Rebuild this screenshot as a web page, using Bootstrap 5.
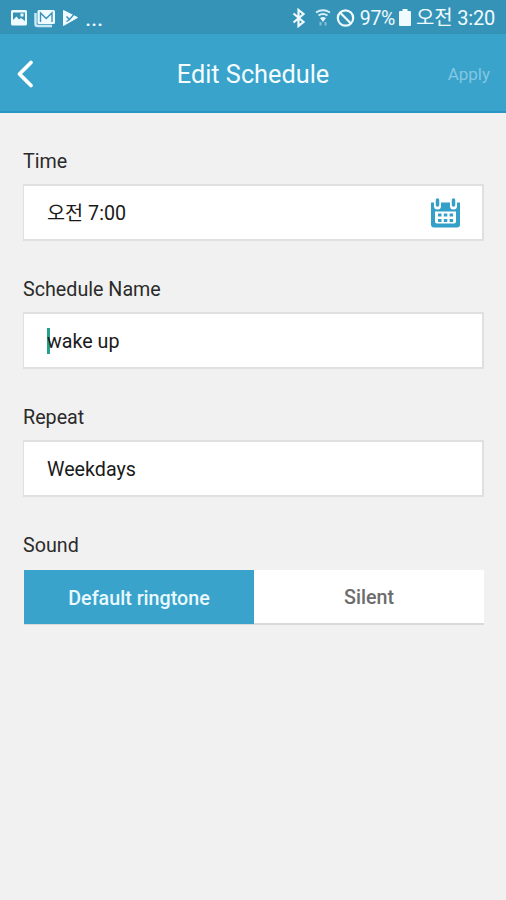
<!DOCTYPE html>
<html lang="en">
<head>
<meta charset="utf-8">
<meta name="viewport" content="width=device-width, initial-scale=1">
<title>Edit Schedule</title>
<link href="https://cdn.jsdelivr.net/npm/bootstrap@5.3.0/dist/css/bootstrap.min.css" rel="stylesheet">
<style>
  body { font-family: Roboto, "Noto Sans CJK KR", sans-serif; background: #f1f1f1; color: #2b2b2b; min-height: 900px; font-size: 19.700px; line-height: 24px; }
  svg { display: block; flex: none; }
  .status-bar { height: 34px; background: #3593b8; padding: 2px 11px 0 10px; color: #f0fbff; font-size: 20px; }
  .status-dots { font-size: 24px; margin-left: 6px; letter-spacing: -.3px; }
  .battery-level { font-size: 19.5px; letter-spacing: -.3px; margin: 1px 4px 0 5px; }
  .clock { margin-left: 5px; font-size: 20px; letter-spacing: -.2px; }
  .title-bar { height: 79px; background: #39a3cb; border-bottom: 2px solid #2695c3; padding: 2px 16px 0; display: grid; grid-template-columns: 1fr auto 1fr; }
  .title-bar h1 { font-size: 25.300px; font-weight: 400; color: #f4fcff; padding-top: 4px; }
  .apply-action { font-size: 17px; color: #83c7e2; background: none; border: 0; padding: 0; }
  .schedule-form { padding: 37px 22px 0 23px; }
  .field { height: 128px; }
  .field-label { line-height: 24px; margin-bottom: 10px; display: block; }
  .field-box { height: 57px; background: #fff; border: 2px solid #e0e0e0; border-left-width: 1px; padding: 3px 22px 0 23px; color: #1a1a1a; }
  .calendar-icon { margin-top: -3px; }
  .caret { width: 3px; height: 26px; background: #26a08f; margin: -2px -3px 0 0; }
  .sound-switch { height: 55px; margin: 12px 0 0 1px; border-bottom: 2px solid #d9d9d9; }
  .sound-switch button { border: 0; padding: 3px 0 0; font-weight: 500; }
  .sound-on { background: #39a3cb; color: #e8f9ff; margin-bottom: -1px; }
  .sound-off { background: #fff; color: #6c6c6c; }
</style>
</head>
<body>
<div class="status-bar d-flex align-items-center justify-content-between">
  <div class="d-flex align-items-center">
    <svg width="18" height="18" viewBox="0 0 18 18"><path fill="#f0fbff" fill-rule="evenodd" d="M2.500 1h13a1.500 1.500 0 0 1 1.500 1.500v12.500a1.500 1.500 0 0 1-1.500 1.500h-13a1.500 1.500 0 0 1-1.500-1.500v-12.500a1.500 1.500 0 0 1 1.500-1.500zM3 3.500V11l3.500-3.500 2.500 3 2-1.500 4 3v-8.500zM10.500 4.500h3v3h-3z"/></svg>
    <svg class="ms-1" width="24" height="19" viewBox="0 0 24 19"><path d="M3.500 4v11q0 2 2 2H20" fill="none" stroke="#c6e9f5" stroke-width="2.500"/><rect x="5.500" y="1" width="17.500" height="14" rx="1.500" fill="#f0fbff"/><path d="M8.500 13V4l5.700 5.500L20 4v9" fill="none" stroke="#3593b8" stroke-width="1.400"/></svg>
    <svg class="ms-1" width="19" height="18" viewBox="0 0 19 18"><path d="M3.500 1.500 17.500 8.500 3.500 16.500z" fill="#f0fbff" stroke="#f0fbff" stroke-linejoin="round"/><path d="M6.500 7.500l3 3 6-7M6.500 12.500l3-2" fill="none" stroke="#3593b8" stroke-width="1.500"/></svg>
    <span class="status-dots">...</span>
  </div>
  <div class="d-flex align-items-center">
    <svg width="14" height="20" viewBox="0 0 14 20"><path d="M1.500 5.500 11.500 14l-5 4V2l5 4-10 8.500" fill="none" stroke="#f0fbff" stroke-width="2.200"/></svg>
    <svg class="ms-2" width="18" height="20" viewBox="0 0 18 20"><g fill="none" stroke="#d5f0f9" stroke-width="2"><path d="M2 4.500q7-4.500 14 0M4.500 7.500q4.500-3 9 0"/></g><path d="M6 10q3-2 6 0l-3 4z" fill="#e5f7fc"/><path d="M6.500 14v3.500M11.500 14v3.500" stroke="#83bfd8" stroke-width="2"/></svg>
    <svg class="ms-1" width="19" height="20" viewBox="0 0 19 20"><circle cx="9.500" cy="10" r="7.700" fill="none" stroke="#f0fbff" stroke-width="2.200"/><path d="M4 4.500 15 15.500" stroke="#f0fbff" stroke-width="2.200"/></svg>
    <span class="battery-level">97%</span>
    <svg width="12" height="20" viewBox="0 0 12 20"><path fill="#f0fbff" d="M3.500 1h5v2H11q1 0 1 1v13q0 1-1 1H1q-1 0-1-1V4q0-1 1-1h2.500z"/></svg>
    <span class="clock">오전 3:20</span>
  </div>
</div>
<header class="title-bar align-items-center">
  <svg width="20" height="30" viewBox="0 0 20 30"><path d="M15 3.500 3.500 15 15 26.500" fill="none" stroke="#fff" stroke-width="3.800" stroke-linecap="round" stroke-linejoin="round"/></svg>
  <h1 class="m-0">Edit Schedule</h1>
  <button class="apply-action text-end" type="button">Apply</button>
</header>
<main class="schedule-form">
  <section class="field">
    <span class="field-label">Time</span>
    <div class="field-box d-flex align-items-center justify-content-between">
      <span>오전 7:00</span>
      <svg class="calendar-icon" width="29" height="32" viewBox="0 0 29 32"><path d="M0 5.500h29v22q0 3-3 3H3q-3 0-3-3z" fill="#349fc7"/><path d="M4 14.500h21v10q0 2-2 2H6q-2 0-2-2z" fill="#fff"/><g fill="none" stroke-linecap="round"><path d="M6.500 4v5M22.500 4v5" stroke="#fff" stroke-width="7"/><path d="M6.500 3v5M22.500 3v5" stroke="#349fc7" stroke-width="3.500"/></g><path d="M7 16.500h3.500v3H7zM12.800 16.500h3.500v3h-3.500zM18.600 16.500h3.500v3h-3.500zM7 22h3.500v3H7zM12.800 22h3.500v3h-3.500zM18.600 22h3.500v3h-3.500z" fill="#349fc7"/></svg>
    </div>
  </section>
  <section class="field">
    <span class="field-label">Schedule Name</span>
    <div class="field-box d-flex align-items-center"><span class="caret"></span><span class="position-relative">wake up</span></div>
  </section>
  <section class="field">
    <span class="field-label">Repeat</span>
    <div class="field-box d-flex align-items-center">Weekdays</div>
  </section>
  <section>
    <span class="field-label">Sound</span>
    <div class="sound-switch d-flex">
      <button class="sound-on w-50" type="button">Default ringtone</button>
      <button class="sound-off w-50" type="button">Silent</button>
    </div>
  </section>
</main>
<script src="https://cdn.jsdelivr.net/npm/bootstrap@5.3.0/dist/js/bootstrap.bundle.min.js"></script>
</body>
</html>
